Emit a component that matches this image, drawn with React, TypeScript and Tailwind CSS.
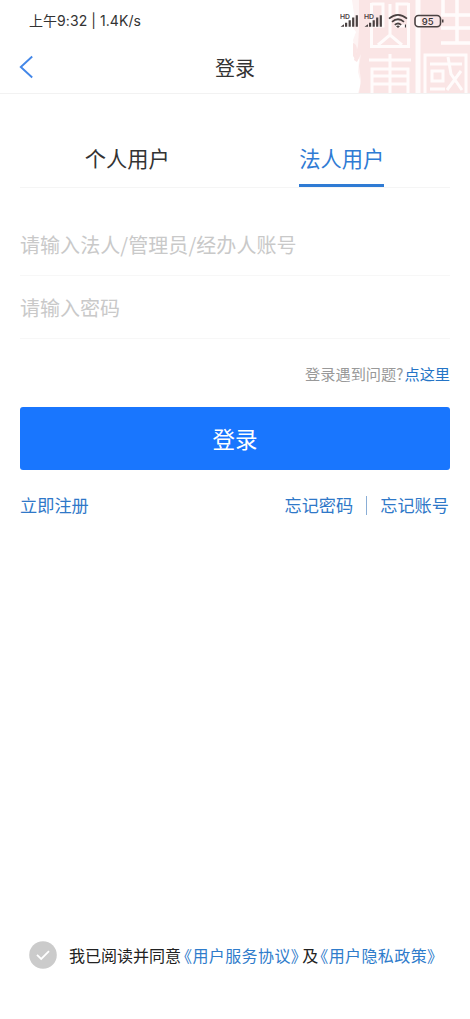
import React from "react";

const row = "flex items-center whitespace-nowrap";

function Signal() {
  return (
    <svg width="20" height="16" viewBox="0 0 20 16" fill="#4a4242">
      <text x="0" y="5.8" fontSize="6.8" fontWeight="600" fontFamily="Inter, sans-serif">HD</text>
      <path d="M.5 13.8 4 11.2v2.6zM5 9.8h2.2v4H5zM8.6 7.2h2.2v6.6H8.6zM12.1 4.4h2.2v9.4h-2.2zM15.7 2.2h2.2v11.6h-2.2z" />
    </svg>
  );
}

function Seal() {
  return (
    <svg className="absolute top-0 right-0" width="120" height="93" viewBox="350 0 120 93">
      <path d="M352 0H362V93H358L361 84 358 72 359 60 355 52 353 40 356 32 352 26 354 14Z" fill="#fdf3f3" />
      <path d="M359 0H470V93H359L361 80 359 66 361 54 357 62 354 60 358 46 359 30Z" fill="#fae5e5" />
      <path d="M353 43q4 1 4 7l-2 9-2-3z" fill="#fae5e5" />
      <g fill="none" stroke="#fffbfb" strokeWidth="3">
        <path d="M418 0V93" strokeWidth="5" />
        <path d="M371.5 3V46.5H408.5V3M371.5 4H383V26H371.5M408.5 4H397V26H408.5M390 4V35L378 45M390 35L402 45" />
        <path d="M369 60H411M372 69H408V84H372ZM372 76H408M390 54V93M372 84V93M408 84V93" />
        <path d="M443 0V16M457 0V44M441 15H470M441 28H470M441 43H470" strokeWidth="3.6" />
        <path d="M425 93V55H466V93M430 64H462M432 71H443V81H432ZM430 89H445M448 57 451 74 462 90M461 71 447 90" />
      </g>
    </svg>
  );
}

export default function App() {
  return (
    <main className="relative flex h-[1019px] w-[470px] flex-col overflow-hidden bg-white text-[#333] font-['Noto_Sans_CJK_SC',sans-serif]">
      <Seal />
      <div className={`${row} relative h-[42px] justify-between pl-[29px] pr-[25px]`}>
        <span className="text-[14px] leading-[20px] tracking-[0.06px] font-['Inter','Noto_Sans_CJK_SC',sans-serif]">上午9:32 | 1.4K/s</span>
        <div className="flex items-center">
          <Signal />
          <span className="w-1" />
          <Signal />
          <svg className="ml-[4px] mr-px" width="20" height="16" viewBox="0 0 20 16" fill="none" stroke="#4a4242" strokeWidth="1.7">
            <path d="M1 5.6Q10-2 19 5.6M4 8.8Q10 3.7 16 8.8M6.8 11.8Q10 9.2 13.2 11.8" />
            <path d="M8 13.3Q10 11.8 12 13.3L10 15Z" fill="#4a4242" stroke="none" />
            <path d="M17.5 11.5v3" strokeWidth="1.2" />
          </svg>
          <svg className="ml-[5px]" width="31" height="15" viewBox="0 0 31 15">
            <rect x="1" y="1.5" width="25.5" height="11.2" rx="3.5" fill="none" stroke="#4a4242" strokeWidth="1.6" />
            <path d="M28 5.5h1.5v3H28z" fill="#4a4242" />
            <text x="13.7" y="10.5" textAnchor="middle" fontSize="9.5" fontWeight="500" fontFamily="Inter, sans-serif" fill="#3a3535">95</text>
          </svg>
        </div>
      </div>
      <header className="relative flex h-[52px] items-center justify-center border-b border-[#f2f2f2]">
        <button className="absolute left-[19px] top-[13px]" aria-label="返回">
          <svg width="15" height="24" viewBox="0 0 15 24" fill="none" stroke="#4387e8" strokeWidth="1.9"><path d="M13.2 1.5 1.8 12 13.2 22.5" /></svg>
        </button>
        <h1 className="text-[20px] leading-[28px]">登录</h1>
      </header>
      <nav className="mx-[20px] mt-[36px] flex h-[58px] border-b border-[#f5f5f5] text-[21.25px] leading-[30px]">
        <div className="flex flex-1 justify-center pt-[13px]">个人用户</div>
        <div className="flex flex-1 justify-center pr-px text-[#2f7bd4]"><span className="h-[57px] border-b-[3px] border-[#2f7bd4] pt-[13px]">法人用户</span></div>
      </nav>
      <form className="mx-[20px]">
        <div className={`${row} h-[88px] border-b border-[#f7f7f7] pt-[26px] text-[20px] tracking-[0.06px] text-[#c9c9c9]`}>请输入法人/管理员/经办人账号</div>
        <div className={`${row} h-[63px] border-b border-[#f7f7f7] pt-[2px] text-[20px] text-[#c9c9c9]`}>请输入密码</div>
        <div className={`${row} mt-[24px] h-[21px] justify-end text-[15.2px] text-[#999]`}><span className="mr-px">登录遇到问题?</span><a className="text-[#2474c6]">点这里</a></div>
        <button type="button" className="mt-[23px] flex h-[63px] w-full items-center justify-center rounded-[3px] bg-[#1976fe] text-[22.5px] text-white">登录</button>
        <div className={`${row} mt-[23px] h-[24px] justify-between pr-px text-[17.2px] text-[#2f78c8]`}>
          <a>立即注册</a>
          <div className="flex items-center"><a>忘记密码</a><span className="mx-[13px] h-[19px] w-px bg-[#8aaed6]" /><a>忘记账号</a></div>
        </div>
      </form>
      <footer className={`${row} mt-auto mb-[50px] h-[28px] pl-[29px] text-[16px] text-[#222]`}>
        <svg className="mr-[12px]" width="28" height="28" viewBox="0 0 28 28"><circle cx="14" cy="14" r="13.8" fill="#cbcbcb" /><path d="m8 13.8 4.2 4.2 7.8-7.8" fill="none" stroke="#fff" strokeWidth="1.8" /></svg>
        <span>我已阅读并同意</span>
        <a className="mx-[3px] tracking-[0.4px] text-[#2f7ccb] [font-feature-settings:'halt']">《用户服务协议》</a>
        <span>及</span>
        <a className="ml-[2px] tracking-[0.4px] text-[#2f7ccb] [font-feature-settings:'halt']">《用户隐私政策》</a>
      </footer>
    </main>
  );
}
